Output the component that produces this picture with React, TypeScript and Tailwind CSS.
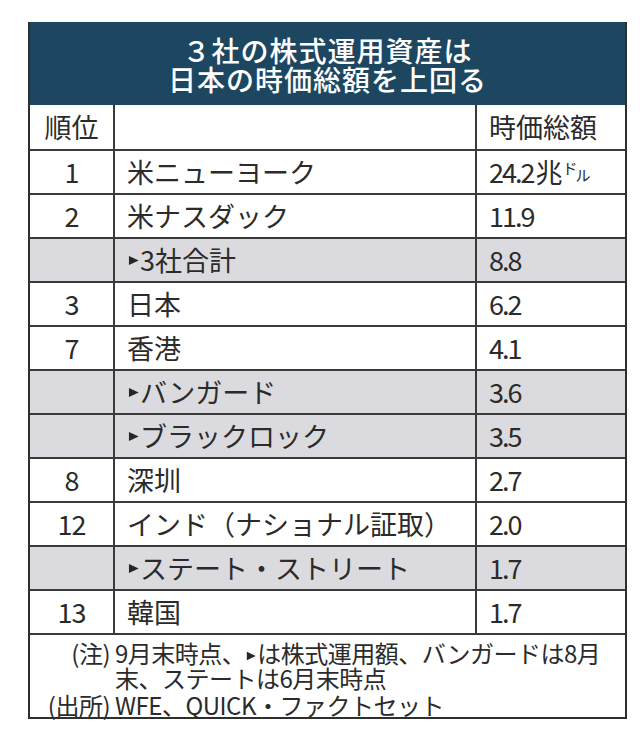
const font = { fontFamily: '"Noto Sans CJK JP", "Noto Sans", sans-serif' };

type Row = {
  rank: string;
  name: string;
  value: string;
  sub?: boolean;
  unit?: boolean;
};

const rows: Row[] = [
  { rank: "1", name: "米ニューヨーク", value: "24.2", unit: true },
  { rank: "2", name: "米ナスダック", value: "11.9" },
  { rank: "", name: "3社合計", value: "8.8", sub: true },
  { rank: "3", name: "日本", value: "6.2" },
  { rank: "7", name: "香港", value: "4.1" },
  { rank: "", name: "バンガード", value: "3.6", sub: true },
  { rank: "", name: "ブラックロック", value: "3.5", sub: true },
  { rank: "8", name: "深圳", value: "2.7" },
  { rank: "12", name: "インド（ナショナル証取）", value: "2.0" },
  { rank: "", name: "ステート・ストリート", value: "1.7", sub: true },
  { rank: "13", name: "韓国", value: "1.7" },
];

function Marker({ size = 13 }: { size?: number }) {
  return (
    <svg width={size} height={size} viewBox="0 0 10 10" className="inline-block shrink-0 align-middle">
      <path d="M1.5 1.5 L9 5 L1.5 8.5 Z" fill="#262626" />
    </svg>
  );
}

export default function App() {
  return (
    <div className="w-[640px] h-[732px] bg-white pt-[22px] pl-[28px]" style={font}>
      <div className="w-[599px] border-x-2 border-b-2 border-[#2e2e2e] text-[#2b2b2b]">
        {/* title */}
        <div className="h-[83px] bg-[#1d4761] pt-[14px] text-center text-white text-[28px] leading-[29px] font-medium tracking-[1px]">
          <div>３社の株式運用資産は</div>
          <div>日本の時価総額を上回る</div>
        </div>

        {/* column header */}
        <div className="grid grid-cols-[83px_362px_1fr] h-[44px] text-[27px]">
          <div className="flex items-center justify-center">順位</div>
          <div className="border-l-2 border-[#3a3a3a]" />
          <div className="border-l-2 border-[#3a3a3a] flex items-center pl-3">時価総額</div>
        </div>

        {rows.map((r, i) => (
          <div
            key={i}
            className={`grid grid-cols-[83px_362px_1fr] h-[44px] border-t-2 border-[#3a3a3a] text-[27px] ${
              r.sub ? "bg-[#dbdbdf]" : "bg-white"
            }`}
          >
            <div className="flex items-center justify-center tracking-[-1px]">{r.rank}</div>
            <div className="border-l-2 border-[#3a3a3a] flex items-center pl-3 whitespace-nowrap">
              {r.sub && <Marker />}
              {r.name}
            </div>
            <div className="border-l-2 border-[#3a3a3a] flex items-center pl-3 whitespace-nowrap">
              <span className="tracking-[-2px]">{r.value}</span>
              {r.unit && (
                <>
                  <span className="ml-[2px]">兆</span>
                  <span className="text-[15px] leading-none self-start mt-[9px]">ド</span>
                  <span className="text-[15px] leading-none self-end mb-[11px] -ml-[2px]">ル</span>
                </>
              )}
            </div>
          </div>
        ))}

        {/* notes */}
        <div className="border-t-2 border-[#3a3a3a] pt-[5px] text-[24px] leading-[25px] whitespace-nowrap tracking-[-0.5px]">
          <div className="grid grid-cols-[80px_1fr] gap-x-[5px]">
            <div className="text-right">(注)</div>
            <div>
              9月末時点、
              <Marker size={12} />
              は株式運用額、バンガードは8月
              <br />
              末、ステートは6月末時点
            </div>
            <div className="text-right pt-[2px]">(出所)</div>
            <div className="pt-[2px]">WFE、QUICK・ファクトセット</div>
          </div>
        </div>
      </div>
    </div>
  );
}
